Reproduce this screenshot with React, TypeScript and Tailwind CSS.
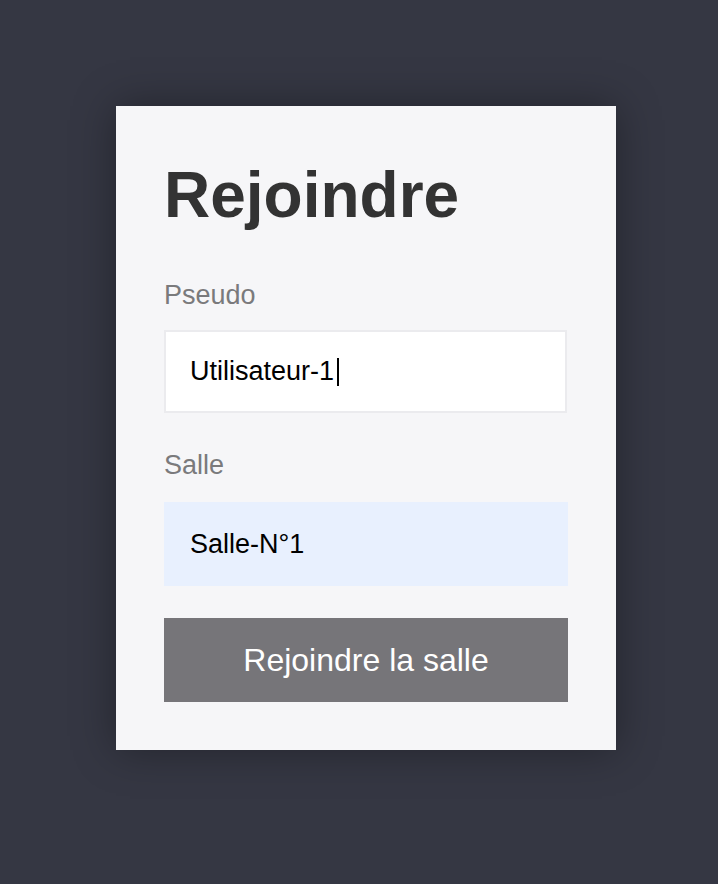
import React from "react";

export default function App() {
  return (
    <div
      className="min-h-[884px] w-full bg-[#353743] pt-[106px] pl-[116px]"
      style={{ fontFamily: '"Liberation Sans", Arial, sans-serif' }}
    >
      <div className="w-[500px] bg-[#f6f6f8] px-12 pt-12 pb-12 shadow-[0_0_40px_rgba(0,0,0,0.35)]">
        <h1 className="text-[64px] leading-[74px] font-bold text-[#333333] mt-[4px]">Rejoindre</h1>

        <label className="block mt-[48px] text-[27px] leading-[31px] text-[#7a7a7c]">Pseudo</label>
        <div className="mt-[19px] h-[83px] w-[403px] border-2 border-[#ebebee] bg-white flex items-center pl-[24px]">
          <span className="text-[27px] text-black leading-none">Utilisateur-1</span>
          <span className="ml-[3px] inline-block h-[28px] w-[2px] bg-black" />
        </div>

        <label className="block mt-[37px] text-[27px] leading-[31px] text-[#7a7a7c]">Salle</label>
        <div className="mt-[21px] h-[84px] w-[404px] bg-[#e8f0fe] flex items-center pl-[26px]">
          <span className="text-[27px] text-black leading-none">Salle-N°1</span>
        </div>

        <button className="mt-[32px] h-[84px] w-[404px] bg-[#767579] text-white text-[32px] flex items-center justify-center">
          Rejoindre la salle
        </button>
      </div>
    </div>
  );
}
